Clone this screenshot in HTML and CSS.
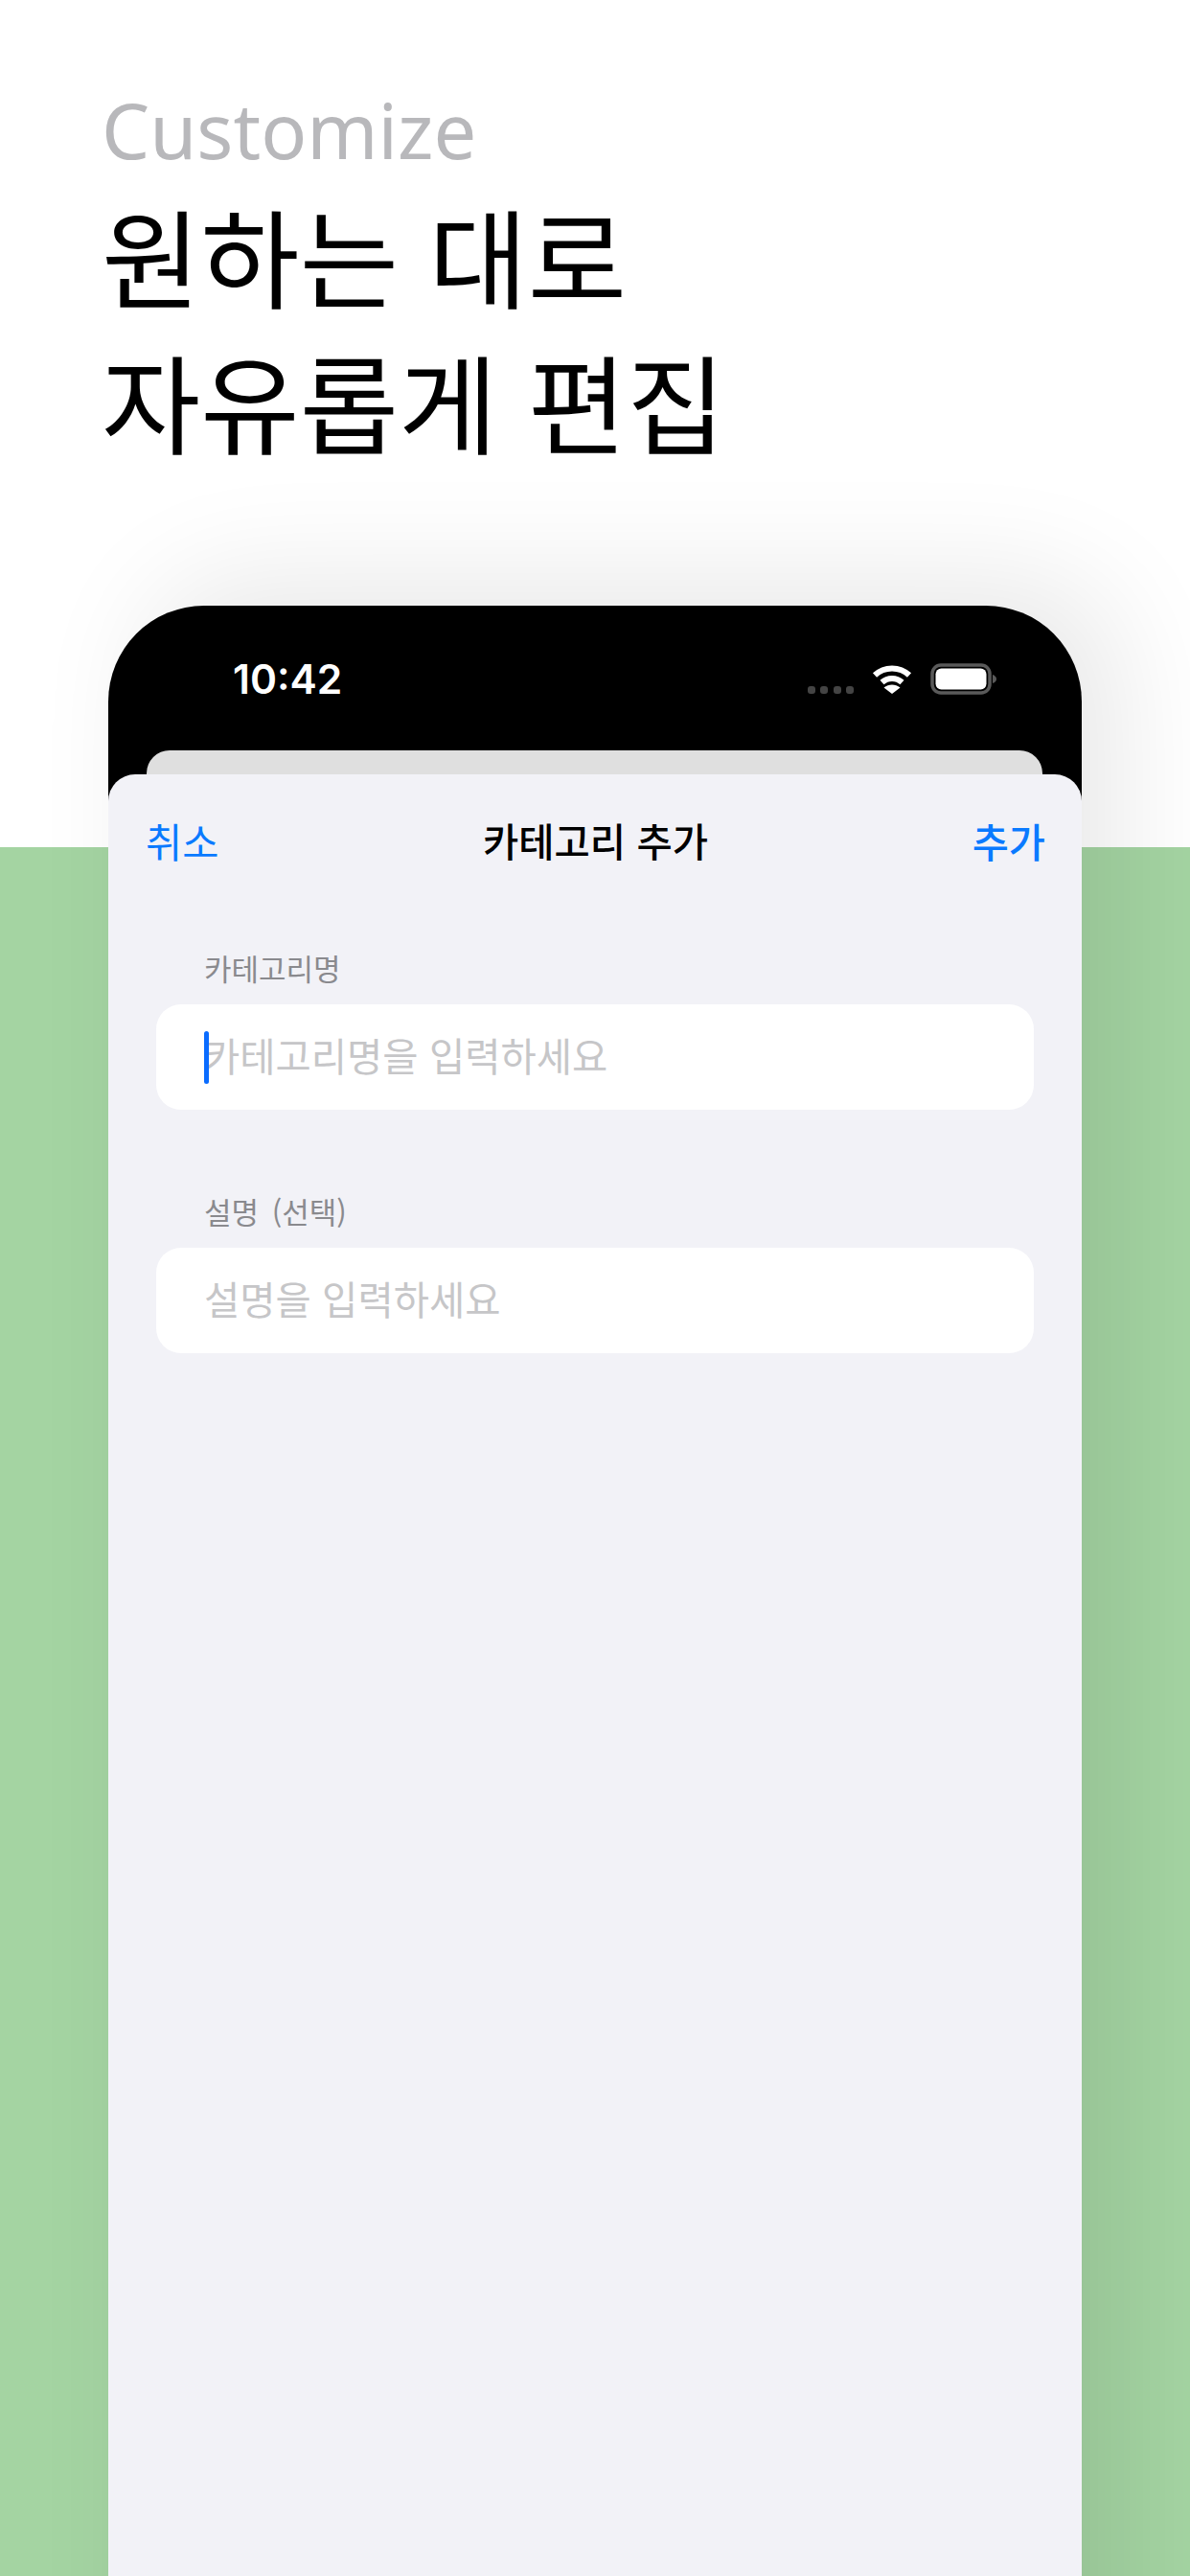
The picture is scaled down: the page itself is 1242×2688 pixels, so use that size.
FILE: index.html
```html
<!DOCTYPE html>
<html lang="ko">
<head>
<meta charset="utf-8">
<title>Customize</title>
<link rel="stylesheet" href="styles.css">
</head>
<body>
<main class="stage">
  <header class="hero">
    <p class="eyebrow">Customize</p>
    <h1 class="headline">원하는 대로<br>자유롭게 편집</h1>
  </header>
  <section class="phone">
    <div class="status">
      <span class="time">10:42</span>
      <div class="status-icons">
        <div class="signal"><i></i><i></i><i></i><i></i></div>
        <svg class="wifi" viewBox="0 0 42 32" aria-hidden="true">
          <path d="M3 12.5C13 3 29 3 39 12.5" fill="none" stroke="#fff" stroke-width="6"/>
          <path d="M10.5 20C16.5 14.5 25.5 14.5 31.5 20" fill="none" stroke="#fff" stroke-width="6"/>
          <path d="M12.5 25.5C17.5 21.5 24.5 21.5 29.5 25.5L21 32Z" fill="#fff"/>
        </svg>
        <svg class="battery" viewBox="0 0 69 33" aria-hidden="true">
          <rect x="2" y="2" width="60" height="29" rx="9" fill="none" stroke="#5a5a5a" stroke-width="3.5"/>
          <rect x="5.5" y="5.5" width="53" height="22" rx="6" fill="#fff"/>
          <path d="M65 12C67.5 13 69 14.500 69 16.500S67.500 20 65 21Z" fill="#5a5a5a"/>
        </svg>
      </div>
    </div>
    <div class="back-card"></div>
    <div class="sheet">
      <nav class="nav">
        <span class="nav-action">취소</span>
        <span class="nav-title">카테고리 추가</span>
        <span class="nav-action nav-add">추가</span>
      </nav>
      <div class="form">
        <div class="group">
          <label class="label">카테고리명</label>
          <div class="field">
            <span class="caret"></span>
            <span class="placeholder">카테고리명을 입력하세요</span>
          </div>
        </div>
        <div class="group">
          <label class="label">설명 (선택)</label>
          <div class="field">
            <span class="placeholder">설명을 입력하세요</span>
          </div>
        </div>
      </div>
    </div>
  </section>
</main>
</body>
</html>
```

FILE: styles.css
```css
* { box-sizing: border-box; }
html, body { margin: 0; padding: 0; }
body {
  width: 1242px;
  height: 2688px;
  overflow: hidden;
  font-family: "Noto Sans CJK KR", "Noto Sans", sans-serif;
}
.stage {
  width: 1242px;
  height: 2688px;
  display: flex;
  flex-direction: column;
  overflow: hidden;
  background: linear-gradient(to bottom, #fff 0, #fff 884px, #a4d4a2 884px, #a4d4a2 100%);
}
.hero {
  height: 632px;
  padding: 87px 0 0 106px;
  flex: none;
}
.eyebrow {
  margin: 0;
  font-family: "Noto Sans", sans-serif;
  font-size: 79.5px;
  line-height: 96px;
  font-weight: 400;
  color: #b8b8bb;
}
.headline {
  margin: 6px 0 0;
  font-size: 112.3px;
  line-height: 152px;
  font-weight: 400;
  color: #000;
}
.phone {
  flex: none;
  height: 2300px;
  margin: 0 113px;
  display: flex;
  flex-direction: column;
  background: #000;
  border-radius: 100px 100px 0 0;
  box-shadow: 40px -30px 120px rgba(0, 0, 0, 0.09);
}
.status {
  height: 151px;
  flex: none;
  padding: 2px 89px 0 130px;
  display: flex;
  align-items: center;
  justify-content: space-between;
}
.time {
  font-family: "Inter", sans-serif;
  font-size: 42.5px;
  font-weight: 600;
  color: #fff;
}
.status-icons {
  display: flex;
  align-items: flex-start;
}
.signal {
  display: flex;
  gap: 5.5px;
  margin: 24px 19px 0 0;
}
.signal i {
  width: 8px;
  height: 8px;
  border-radius: 3px;
  background: #444;
}
.wifi { width: 42px; height: 32px; margin-right: 19px; }
.battery { width: 69px; height: 33px; }
.back-card {
  height: 25px;
  flex: none;
  margin: 0 41px 0 40px;
  background: #dfdfdf;
  border-radius: 24px 24px 0 0;
}
.sheet {
  flex: 1;
  background: #f2f2f7;
  border-radius: 28px 28px 0 0;
}
.nav {
  height: 110px;
  padding: 27px 38px 0 39px;
  display: flex;
  align-items: center;
  justify-content: space-between;
  font-size: 41.5px;
}
.nav-action { color: #0a7aff; }
.nav-add { font-weight: 500; }
.nav-title { font-weight: 500; font-size: 40.5px; color: #000; }
.form {
  padding: 68px 50px 0;
  display: flex;
  flex-direction: column;
  gap: 82px;
}
.label {
  display: block;
  padding-left: 50px;
  font-size: 31px;
  line-height: 48px;
  word-spacing: 5px;
  color: #8a8a8e;
  margin-bottom: 14px;
}
.field {
  position: relative;
  height: 110px;
  padding: 0 50px 5px;
  display: flex;
  align-items: center;
  background: #fff;
  border-radius: 26px;
}
.placeholder {
  font-size: 40.5px;
  color: #c6c6c8;
}
.caret {
  position: absolute;
  left: 50px;
  top: 28px;
  width: 5px;
  height: 55px;
  border-radius: 3px;
  background: #0a6cff;
}
```
